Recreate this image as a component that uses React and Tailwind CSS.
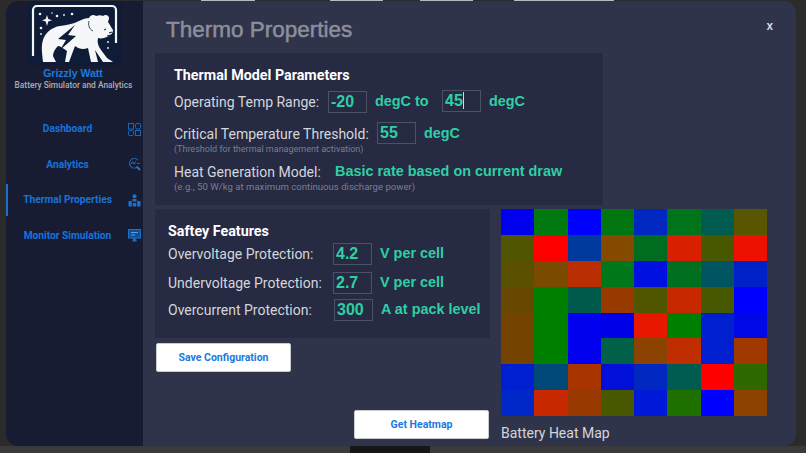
const sans = "font-['Roboto','Noto_Sans',sans-serif]";
const arial = "font-['Liberation_Sans',Arial,sans-serif]";
const value = `${arial} font-bold text-[#2fcfa5] text-[14.400px] whitespace-nowrap`;
const label = `${sans} text-[14px] text-[#d4d6dc] whitespace-nowrap`;

const HEAT = [
  ["#0000ee", "#007a10", "#0000ff", "#007510", "#0028c0", "#00741a", "#005c50", "#5a5500"],
  ["#4f5500", "#ff0000", "#003a9c", "#854a00", "#006c20", "#d82000", "#485800", "#ee1000"],
  ["#5a5000", "#7a4a00", "#b82e00", "#00781a", "#0010e0", "#007020", "#005560", "#0020c8"],
  ["#684800", "#008000", "#005a4c", "#983a00", "#505500", "#c82800", "#485800", "#0000ff"],
  ["#744300", "#008000", "#0000ee", "#0000e8", "#e81800", "#008000", "#0020d0", "#0008e8"],
  ["#744300", "#008000", "#0000ee", "#006048", "#8c4200", "#c02e00", "#0020d0", "#a03800"],
  ["#0020d0", "#004878", "#a83400", "#0010d8", "#0028c0", "#005c50", "#ff0000", "#306800"],
  ["#0028c8", "#c82800", "#983a00", "#485800", "#0018d8", "#207000", "#0000ff", "#8c4200"],
];

function Logo() {
  return (
    <svg viewBox="0 1 100 66" className="w-[100px] h-[66px] block">
      <rect x="3" y="1" width="94" height="65" fill="#0e1c38" />
      <path d="M8 56V10a4 4 0 0 1 4-4h75a4 4 0 0 1 4 4v33" fill="none" stroke="#f4f6f8" strokeWidth="2.200" />
      <path d="M18 62C17 52 16 46 18 40C20 33 27 27 35 26C42 25 48 24 54 21C58 19 61 18 64 18C65 15 69 14 71 16C74 15 76 15 78 16C80 14 84 15 84 18C84 20 83 21 83 22C85 25 86 27 88 30C88 33 86 35 84 36C80 38 76 39 73 38C72 42 73 46 76 50L82 58L88 62H78L70 50L73 62H66L63 48C58 50 54 49 50 46L44 62H40L42 51C38 48 35 46 33 46C30 49 28 52 28 56L31 62Z" fill="#f6f7f8" />
      <path d="M50 25L33 39L41 40L35 50L51 36L43 35L50 25Z" fill="#0e1c38" />
      <path d="M64 21C63 25 64 29 68 31" fill="none" stroke="#0e1c38" strokeWidth="0.800" />
      <path d="M79 30L81 29M84 33L87 32M82 36L86 35" stroke="#0e1c38" strokeWidth="1" />
      <path d="M22 15L23.300 19L27 20.300L23.300 21.600L22 26L20.700 21.600L17 20.300L20.700 19Z" fill="#f4f6f8" />
      <g fill="#f4f6f8">
        <circle cx="15" cy="14" r="1.300" />
        <circle cx="27" cy="13" r="0.800" />
        <circle cx="32" cy="16" r="1.300" />
        <circle cx="39" cy="15" r="0.900" />
        <circle cx="47" cy="14" r="1.300" />
        <circle cx="16" cy="28" r="1.300" />
        <circle cx="16" cy="34" r="0.900" />
        <circle cx="83" cy="42" r="0.900" />
        <circle cx="83" cy="48" r="0.900" />
      </g>
    </svg>
  );
}

function DashIcon() {
  return (
    <svg viewBox="0 0 13 13" className="w-[13px] h-[13px]" fill="none" stroke="#1766b8" strokeWidth="1">
      <rect x="0.500" y="0.500" width="5" height="5.500" />
      <rect x="7.500" y="0.500" width="5" height="5.500" rx="1.500" />
      <rect x="0.500" y="7.500" width="5" height="5" rx="1" />
      <rect x="7.500" y="7.500" width="5" height="5" />
    </svg>
  );
}

function AnalyticsIcon() {
  return (
    <svg viewBox="0 0 13 13" className="w-[13px] h-[13px]" fill="none" stroke="#1766b8" strokeWidth="1.100">
      <path d="M10 2.200A4.800 4.800 0 1 0 8.500 9.500" />
      <path d="M2.500 6.500L4.500 4L6 5.800L8 3.500" />
      <path d="M12 5.500H9" />
      <path d="M8.500 8.500L12 12" stroke="#1a7ae0" strokeWidth="2" />
    </svg>
  );
}

function NetworkIcon() {
  return (
    <svg viewBox="0 0 13 13" className="w-[13px] h-[13px]" fill="#1a72d0">
      <circle cx="6.500" cy="2.200" r="2" />
      <rect x="4.500" y="5" width="4" height="2.500" />
      <rect x="0.500" y="7" width="3.300" height="5.500" />
      <rect x="4.800" y="9" width="3.400" height="3.500" />
      <rect x="9.200" y="7" width="3.300" height="5.500" />
    </svg>
  );
}

function MonitorIcon() {
  return (
    <svg viewBox="0 0 13 13" className="w-[13px] h-[13px]" fill="none" stroke="#1a72d0" strokeWidth="1">
      <rect x="0.500" y="0.500" width="12" height="8.500" fill="#124f90" />
      <path d="M3 3.500H10M3 6H7" stroke="#5aa0e6" />
      <path d="M4.500 11.500H8.500M6.500 9V12" strokeWidth="2" />
    </svg>
  );
}

function NavItem({ name, icon, active }) {
  return (
    <div className="h-[32px] flex items-center relative">
      {active && <div className="absolute left-0 top-0 h-full w-[2px] bg-[#1672d0]" />}
      <span className={`${sans} flex-1 text-center text-[#1673dc] text-[10.200px] font-bold pl-[3px] whitespace-nowrap`}>{name}</span>
      <span className="w-[16px] mr-px flex justify-center">{icon}</span>
    </div>
  );
}

function Box({ children, cls = "" }) {
  return <span className={`inline-block w-[39px] h-[22px] shrink-0 border border-[#4d5164] text-[#2fcfa5] ${arial} font-bold text-[16px] leading-[19px] pl-[2px] ${cls}`}>{children}</span>;
}

function Row({ text, w, box, unit, cls = "" }) {
  return (
    <div className={`flex items-center h-[22px] ${cls}`}>
      <span className={label} style={{ width: w }}>{text}</span>
      <Box>{box}</Box>
      <span className={`${value} ml-[8px]`}>{unit}</span>
    </div>
  );
}

export default function App() {
  return (
    <div className="w-[806px] h-[453px] overflow-hidden bg-[#2b2b2c]">
      <div className="h-px flex">
        <div className="w-[201px]" />
        <div className="w-[54px] bg-[#b8b8b8]" />
        <div className="w-[75px]" />
        <div className="w-[53px] bg-[#b8b8b8]" />
        <div className="w-[37px]" />
        <div className="w-[53px] bg-[#b8b8b8]" />
        <div className="w-[41px]" />
        <div className="w-[100px] bg-[#b8b8b8]" />
      </div>
      <div className="ml-[6px] w-[790px] h-[445px] rounded-xl overflow-hidden flex bg-[#2f344b]">
        <aside className="w-[137px] bg-[#171c33] shrink-0 flex flex-col">
          <div className="flex justify-center"><Logo /></div>
          <div className={`${arial} text-center text-[#1a7ae0] font-bold text-[10.500px] leading-[12px] pr-[3px]`}>Grizzly Watt</div>
          <div className={`${sans} text-center text-[#a9adba] font-medium text-[8.400px] leading-[12px] whitespace-nowrap pr-[2px]`}>Battery Simulator and Analytics</div>
          <div className="mt-[22px] flex flex-col gap-[3.500px]">
            <NavItem name="Dashboard" icon={<DashIcon />} />
            <NavItem name="Analytics" icon={<AnalyticsIcon />} />
            <NavItem name="Thermal Properties" icon={<NetworkIcon />} active />
            <NavItem name="Monitor Simulation" icon={<MonitorIcon />} />
          </div>
        </aside>
        <main className="flex-1 pl-[12px] pr-[29px] flex flex-col">
          <div className="h-[52px] flex items-center justify-between pl-[11px] pt-[6px]">
            <h1 className={`${arial} font-normal text-[22.500px] text-[#8b8f9c] [-webkit-text-stroke:0.5px_#8b8f9c]`}>Thermo Properties</h1>
            <span className={`${sans} text-[#d6d8e0] text-[13px] font-medium -mr-[6px] -mt-[8px]`}>x</span>
          </div>
          <section className="w-[448px] h-[152px] bg-[#262a42] pl-[19px] pt-[12px]">
            <h2 className={`${sans} font-bold text-[14.300px] leading-[20px] text-white`}>Thermal Model Parameters</h2>
            <div className="flex items-center mt-[5px] h-[24px]">
              <span className={`${label} w-[154px]`}>Operating Temp Range:</span>
              <Box>-20</Box>
              <span className={`${value} ml-[8px] w-[67px]`}>degC to</span>
              <span className={`inline-flex w-[39px] h-[22px] -mt-[2px] border border-[#4d5164] text-[#2fcfa5] ${arial} font-bold text-[16px] leading-[19px] pl-[2px]`}>45<span className="w-px h-[17px] mt-px bg-[#d4d6dc]" /></span>
              <span className={`${value} ml-[8px]`}>degC</span>
            </div>
            <div className="flex items-center mt-[8px] h-[24px]">
              <span className={`${label} w-[203px]`}>Critical Temperature Threshold:</span>
              <Box cls="-mt-[3px]">55</Box>
              <span className={`${value} ml-[8px]`}>degC</span>
            </div>
            <p className={`${sans} text-[9px] leading-[12px] text-[#7b7f90] -mt-[3px]`}>(Threshold for thermal management activation)</p>
            <div className="flex items-center mt-[5px] h-[24px]">
              <span className={`${label} w-[161px]`}>Heat Generation Model:</span>
              <span className={value}>Basic rate based on current draw</span>
            </div>
            <p className={`${sans} text-[9.600px] leading-[12px] text-[#7b7f90] -mt-[3px]`}>(e.g., 50 W/kg at maximum continuous discharge power)</p>
          </section>
          <div className="flex mt-[4px]">
            <div className="w-[335px] shrink-0 flex flex-col">
              <section className="h-[129px] bg-[#262a42] pl-[13px] pt-[12px]">
                <h2 className={`${sans} font-bold text-[14.300px] leading-[20px] text-white mb-[2px]`}>Saftey Features</h2>
                <Row text="Overvoltage Protection:" w={165} box="4.2" unit="V per cell" />
                <Row text="Undervoltage Protection:" w={165} box="2.7" unit="V per cell" cls="mt-[7px]" />
                <Row text="Overcurrent Protection:" w={166} box="300" unit="A at pack level" cls="mt-[5px]" />
              </section>
              <button className={`${sans} w-[135px] h-[29px] mt-[5px] ml-px rounded-[2px] bg-white text-[#1a7ae0] text-[10.500px] font-bold border border-[#c9cbd2]`}>Save Configuration</button>
              <button className={`${sans} w-[135px] h-[29px] mt-[38px] ml-[199px] rounded-[2px] bg-white text-[#1a7ae0] text-[10.500px] font-bold border border-[#c9cbd2]`}>Get Heatmap</button>
            </div>
            <div className="ml-[11px]">
              <div className="w-[266px] h-[207px] grid grid-cols-8 grid-rows-8">
                {HEAT.flat().map((c, i) => <div key={i} style={{ background: c }} />)}
              </div>
              <p className={`${label} leading-[20px] mt-[7px]`}>Battery Heat Map</p>
            </div>
          </div>
        </main>
      </div>
      <div className="h-[7px] flex">
        <div className="w-[350px] bg-[#3a3a3a]" />
        <div className="w-[80px] bg-[#161616]" />
        <div className="flex-1 bg-[#3a3a3a]" />
      </div>
    </div>
  );
}
